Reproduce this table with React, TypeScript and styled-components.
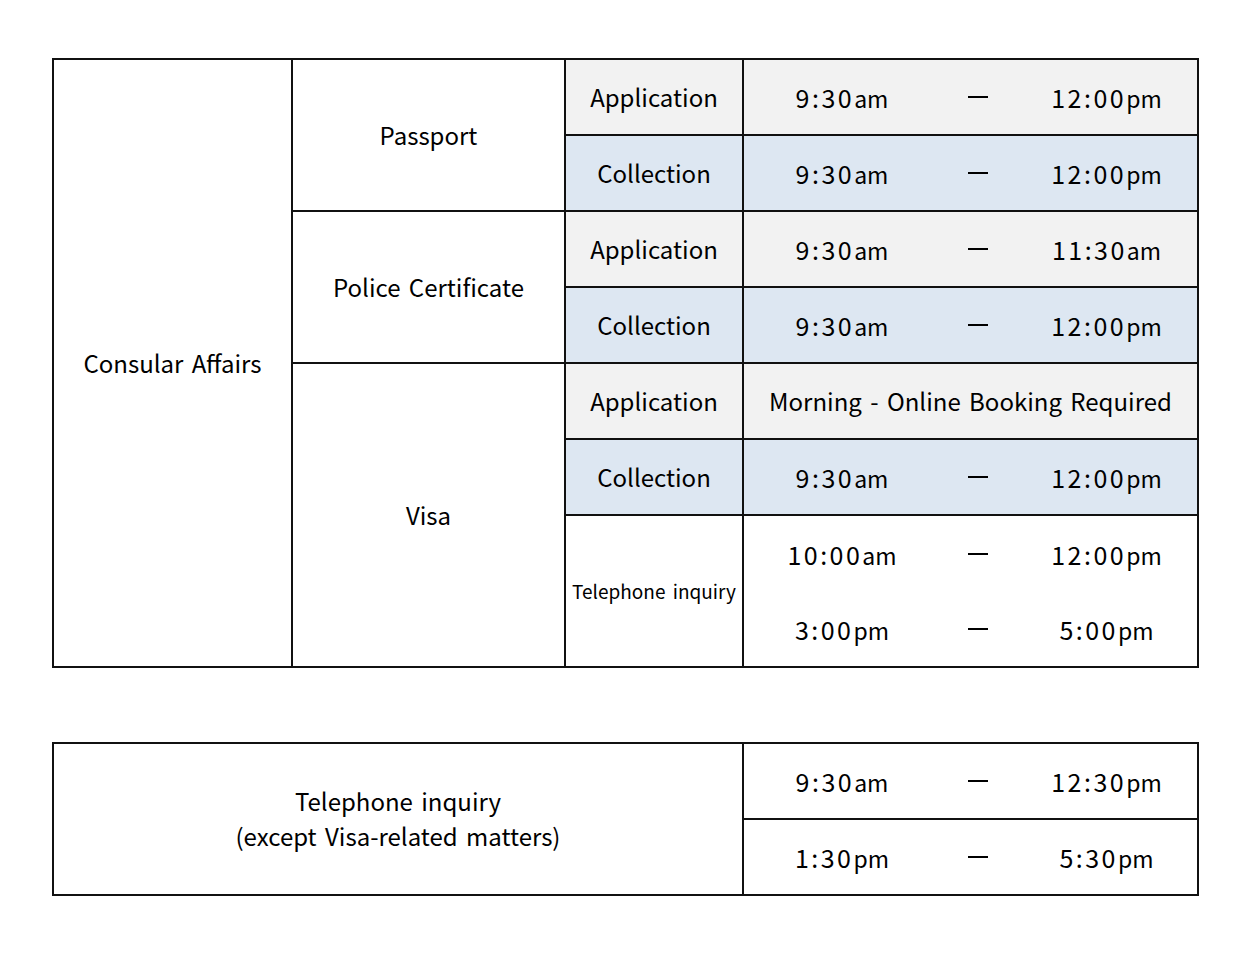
import React from "react";
import styled, { createGlobalStyle } from "styled-components";

const GlobalStyle = createGlobalStyle`
    html, body {
        margin: 0;
        padding: 0;
        background: #ffffff;
    }
    body {
        font-family: "Noto Sans CJK JP", "Noto Sans", sans-serif;
        color: #000;
    }
`;

const Page = styled.div`
    padding: 58px 0 0 52px;
    display: flex;
    flex-direction: column;
    gap: 74px;
`;

const Grid = styled.div<{ $cols: string; $rows: number }>`
    display: grid;
    grid-template-columns: ${(p) => p.$cols};
    grid-template-rows: repeat(${(p) => p.$rows}, 74px);
    gap: 2px;
    padding: 2px;
    background: #111;
    width: 1143px;
`;

const Cell = styled.div<{ $bg?: string; $span?: number; $size?: number }>`
    background: ${(p) => p.$bg || "#ffffff"};
    grid-row: span ${(p) => p.$span || 1};
    display: flex;
    flex-direction: column;
    align-items: center;
    justify-content: center;
    text-align: center;
    font-size: ${(p) => p.$size || 24}px;
    word-spacing: 3px;
    line-height: 1.45;
`;

const TimeCell = styled.div<{ $bg?: string; $span?: number }>`
    background: ${(p) => p.$bg || "#ffffff"};
    grid-row: span ${(p) => p.$span || 1};
    display: flex;
    flex-direction: column;
    justify-content: space-around;
`;

const TimeRow = styled.div`
    display: grid;
    grid-template-columns: 196px 76px 1fr;
    align-items: center;
    font-size: 23px;
`;

const TimeText = styled.span`
    text-align: center;
    white-space: nowrap;
    .d {
        font-size: 25px;
        letter-spacing: 2.5px;
    }
`;

const Dash = styled.span`
    justify-self: center;
    width: 20px;
    height: 2px;
    background: #000;
`;

const GREY = "#f2f2f2";
const BLUE = "#dde7f2";

const T = ({ v }: { v: string }) => {
    const m = v.match(/^([\d:]+)(am|pm)$/);
    if (!m) return <TimeText>{v}</TimeText>;
    return (
        <TimeText>
            <span className="d">{m[1]}</span>
            {m[2]}
        </TimeText>
    );
};

const Range = ({ from, to }: { from: string; to: string }) => (
    <TimeRow>
        <T v={from} />
        <Dash />
        <T v={to} />
    </TimeRow>
);

const Slot = ({ bg, from, to }: { bg?: string; from: string; to: string }) => (
    <TimeCell $bg={bg}>
        <Range from={from} to={to} />
    </TimeCell>
);

const App = () => {
    return (
        <Page>
            <GlobalStyle />
            <Grid $cols="237px 271px 176px 453px" $rows={8}>
                <Cell $span={8}>Consular Affairs</Cell>

                <Cell $span={2}>Passport</Cell>
                <Cell $bg={GREY}>Application</Cell>
                <Slot bg={GREY} from="9:30am" to="12:00pm" />
                <Cell $bg={BLUE}>Collection</Cell>
                <Slot bg={BLUE} from="9:30am" to="12:00pm" />

                <Cell $span={2}>Police Certificate</Cell>
                <Cell $bg={GREY}>Application</Cell>
                <Slot bg={GREY} from="9:30am" to="11:30am" />
                <Cell $bg={BLUE}>Collection</Cell>
                <Slot bg={BLUE} from="9:30am" to="12:00pm" />

                <Cell $span={4}>Visa</Cell>
                <Cell $bg={GREY}>Application</Cell>
                <Cell $bg={GREY}>Morning - Online Booking Required</Cell>
                <Cell $bg={BLUE}>Collection</Cell>
                <Slot bg={BLUE} from="9:30am" to="12:00pm" />
                <Cell $span={2} $size={19}>
                    Telephone inquiry
                </Cell>
                <TimeCell $span={2}>
                    <Range from="10:00am" to="12:00pm" />
                    <Range from="3:00pm" to="5:00pm" />
                </TimeCell>
            </Grid>

            <Grid $cols="688px 453px" $rows={2}>
                <Cell $span={2}>
                    <span>Telephone inquiry</span>
                    <span>(except Visa-related matters)</span>
                </Cell>
                <Slot from="9:30am" to="12:30pm" />
                <Slot from="1:30pm" to="5:30pm" />
            </Grid>
        </Page>
    );
};

export default App;
